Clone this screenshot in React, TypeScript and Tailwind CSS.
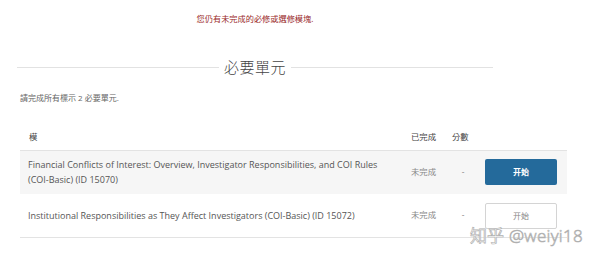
import React from 'react'

const cjk = '"Open Sans", "Noto Sans CJK TC", "Noto Sans CJK SC", sans-serif'

const ROWS = [
  {
    title: 'Financial Conflicts of Interest: Overview, Investigator Responsibilities, and COI Rules (COI-Basic) (ID 15070)',
    status: '未完成',
    score: '-',
    primary: true,
  },
  {
    title: 'Institutional Responsibilities as They Affect Investigators (COI-Basic) (ID 15072)',
    status: '未完成',
    score: '-',
    primary: false,
  },
]

export default function App() {
  return (
    <div className="relative w-[600px] h-[263px] overflow-hidden bg-white text-[#555]" style={{ fontFamily: cjk }}>
      {/* notice + section title */}
      <div className="ml-[17px] w-[476px] flex flex-col">
        <p className="mt-[13px] h-[12px] text-center text-[8.2px] leading-[12px] text-[#9a2a2a]">
          您仍有未完成的必修或選修模塊.
        </p>
        <div className="mt-[32px] flex items-center gap-[5px]">
          <div className="h-px flex-1 bg-[#e2e2e2]" />
          <h2 className="text-[15px] leading-[20px] font-light text-[#444] tracking-[0.5px]">必要單元</h2>
          <div className="h-px flex-1 bg-[#e2e2e2]" />
        </div>
      </div>

      <p className="ml-[20px] mt-[15px] text-[8px] leading-[12px] text-[#666]">請完成所有標示 2 必要單元.</p>

      {/* table */}
      <div className="ml-[20px] mt-[21px] w-[547px] text-[8.4px]">
        <div className="flex h-[26px] items-center border-b border-[#e3e3e3] text-[#444]">
          <div className="w-[391px] pl-[9px]">模</div>
          <div className="w-[41px]">已完成</div>
          <div className="w-[20px]">分數</div>
        </div>
        {ROWS.map((r) => (
          <div
            key={r.title}
            className={`flex items-center border-b ${r.primary ? 'h-[43px] bg-[#f6f6f6] border-transparent' : 'h-[44px] bg-white border-[#e3e3e3]'}`}
          >
            <div className="w-[391px] pl-[8px] pr-[26px] text-[9px] leading-[15px] text-[#555]">{r.title}</div>
            <div className="w-[42px] text-[#888]">{r.status}</div>
            <div className="w-[20px] text-center text-[#888]">{r.score}</div>
            <button
              className={`ml-[12px] flex h-[26px] w-[72px] items-center justify-center rounded-[2px] text-[8px] ${
                r.primary ? 'bg-[#246a9b] font-bold text-white' : 'border border-[#d4d4d4] bg-white text-[#888]'
              }`}
            >
              开始
            </button>
          </div>
        ))}
      </div>

      {/* watermark */}
      <div className="absolute left-[470px] top-[225px] flex items-center gap-[5px] whitespace-nowrap text-[17px] leading-[22px] text-white [-webkit-text-stroke:0.7px_#b0b0b0]">
        <span>知乎</span>
        <span className="font-light tracking-[0.3px]">@weiyi18</span>
      </div>
    </div>
  )
}
